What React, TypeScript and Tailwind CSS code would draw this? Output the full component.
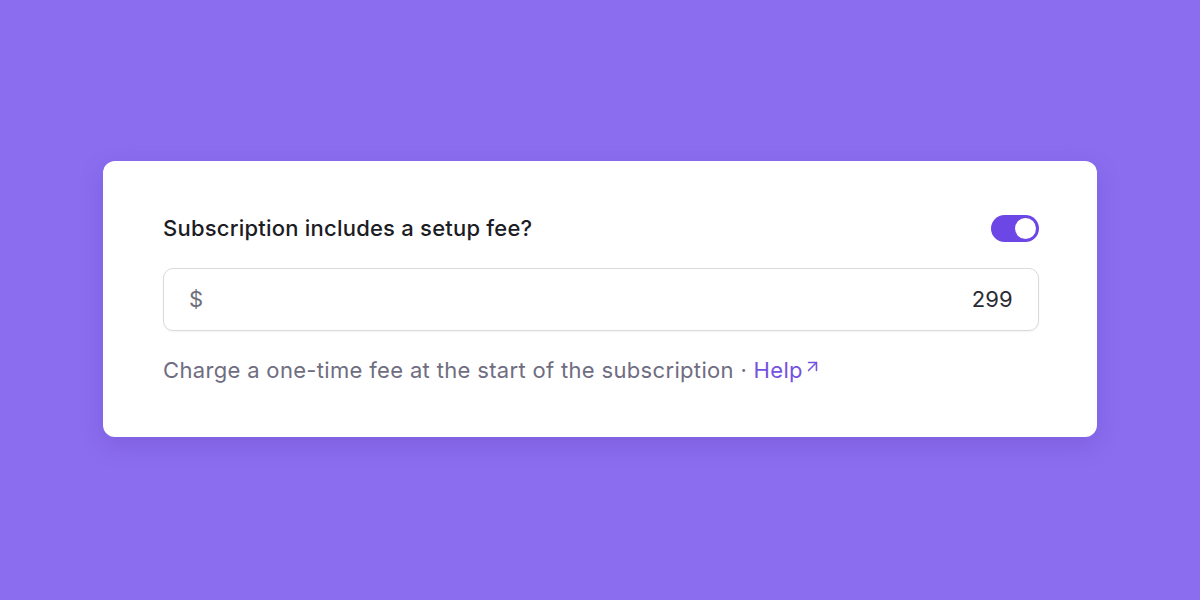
import { ArrowUpRight } from 'lucide-react';

export default function App() {
  return (
    <div
      className="flex h-[600px] w-full items-start justify-center bg-[#8b6ef0] pt-[161px]"
      style={{ fontFamily: 'Inter, "Noto Sans", sans-serif' }}
    >
      <div className="flex w-[994px] flex-col rounded-xl bg-white pt-[53px] pr-[58px] pb-[53px] pl-[60px] shadow-[0_8px_24px_rgba(60,30,140,0.18)]">
        {/* Header row with toggle */}
        <div className="flex h-[28px] items-center justify-between">
          <span className="text-[22px] leading-[28px] font-medium tracking-[0.01em] text-[#1c1c24]">
            Subscription includes a setup fee?
          </span>
          <button
            type="button"
            role="switch"
            aria-checked
            className="relative h-[27px] w-[48px] rounded-full bg-[#6d47e6]"
          >
            <span className="absolute top-[3px] right-[3px] h-[21px] w-[21px] rounded-full bg-white" />
          </button>
        </div>

        {/* Amount field */}
        <div className="mt-[26px] flex h-[63px] items-center justify-between rounded-[10px] border border-[#d9d9de] px-[25px] shadow-[0_1px_2px_rgba(0,0,0,0.05)]">
          <span className="text-[22px] text-[#6e6e7a]">$</span>
          <span className="text-[22px] tracking-[0.01em] text-[#2a2a33]">299</span>
        </div>

        {/* Helper text */}
        <p className="mt-[25px] flex items-center text-[22px] leading-[28px] tracking-[0.015em] text-[#6f6d80]">
          Charge a one-time fee at the start of the subscription ·&nbsp;
          <span className="flex items-center text-[#7552e0]">
            Help
            <ArrowUpRight size={19} strokeWidth={2} className="-mt-[7px]" />
          </span>
        </p>
      </div>
    </div>
  );
}
